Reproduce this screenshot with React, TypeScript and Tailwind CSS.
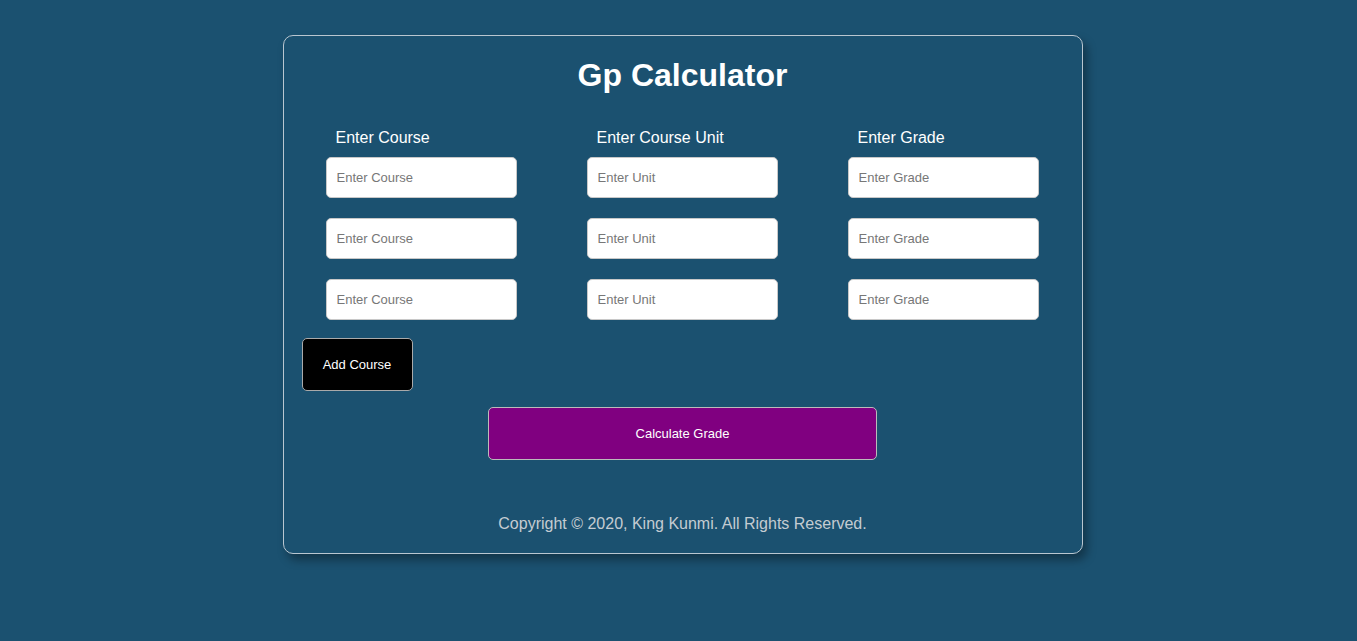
import { useState } from 'react'

type Row = { course: string; unit: string; grade: string }

export default function App() {
  const [rows, setRows] = useState<Row[]>([
    { course: '', unit: '', grade: '' },
    { course: '', unit: '', grade: '' },
    { course: '', unit: '', grade: '' },
  ])

  const update = (i: number, key: keyof Row, v: string) =>
    setRows((r) => r.map((row, j) => (j === i ? { ...row, [key]: v } : row)))

  const inputCls =
    'h-[41px] w-[191px] rounded-[5px] border border-[#c8c8c8] bg-white px-[10px] text-[13px] text-gray-800 placeholder:text-[#777] outline-none'

  return (
    <div
      className="flex min-h-[641px] w-full justify-center bg-[#1b5170] pl-[8px] pt-[35px]"
      style={{ fontFamily: '"Liberation Sans", Arial, sans-serif' }}
    >
      <div className="h-[519px] w-[800px] rounded-[10px] border border-[#b9c6d0] bg-[#1b5170] shadow-[4px_6px_10px_rgba(0,0,0,0.35)]">
        <h1 className="mt-[18px] text-center text-[32px] font-bold leading-[42px] text-white">Gp Calculator</h1>

        <div className="mt-[33px] flex gap-[70px] pl-[42px]">
          {(['course', 'unit', 'grade'] as const).map((key, c) => (
            <div key={key} className="flex flex-col">
              <label className="mb-[10px] pl-[10px] text-[16px] leading-[18px] text-white">
                {['Enter Course', 'Enter Course Unit', 'Enter Grade'][c]}
              </label>
              <div className="flex flex-col gap-[20px]">
                {rows.map((row, i) => (
                  <input
                    key={i}
                    value={row[key]}
                    onChange={(e) => update(i, key, e.target.value)}
                    placeholder={['Enter Course', 'Enter Unit', 'Enter Grade'][c]}
                    className={inputCls}
                  />
                ))}
              </div>
            </div>
          ))}
        </div>

        <div className="mt-[18px] pl-[18px]">
          <button
            onClick={() => setRows((r) => [...r, { course: '', unit: '', grade: '' }])}
            className="h-[53px] w-[111px] rounded-[5px] border border-[#aaa] bg-black text-[13px] text-white"
          >
            Add Course
          </button>
        </div>

        <div className="mt-[16px] flex justify-center">
          <button className="h-[53px] w-[389px] rounded-[5px] border border-[#bbb] bg-[#800080] text-[13px] text-white">
            Calculate Grade
          </button>
        </div>

        <p className="mt-[54px] text-center text-[16px] leading-[20px] text-[#c4ccd2]">
          Copyright © 2020, King Kunmi. All Rights Reserved.
        </p>
      </div>
    </div>
  )
}
